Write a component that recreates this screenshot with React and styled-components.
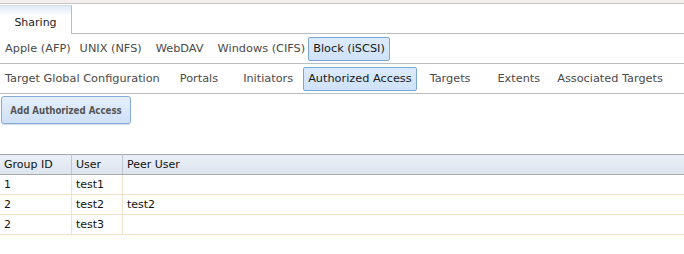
import React from "react";
import styled, { createGlobalStyle } from "styled-components";

const Global = createGlobalStyle`
  html, body { margin: 0; padding: 0; background: #fff; }
  body { font-family: "DejaVu Sans", "Liberation Sans", sans-serif; font-size: 11.3px; color: #3c3c3c; }
`;

const TopStrip = styled.div`
  height: 3px;
  background: #f3efef;
  border-bottom: 1px solid #c6c6c6;
`;

const TabBar = styled.div`
  display: flex;
  margin-top: 1px;
  height: 28px;
  border-bottom: 1px solid #b9bcc2;
`;

const MainTab = styled.div`
  width: 72px;
  box-sizing: border-box;
  border-right: 1px solid #b9bcc2;
  border-top: 1px solid #d6dde8;
  margin-bottom: -1px;
  background: linear-gradient(#dfe9f7 0%, #ffffff 35%);
  display: flex;
  align-items: center;
  justify-content: center;
  padding-top: 5px;
  font-size: 11px;
  color: #222;
`;

const NavRow = styled.div`
  display: flex;
  align-items: center;
  height: 29px;
  border-bottom: 1px solid #b9bcc2;
`;

const NavItem = styled.div`
  box-sizing: border-box;
  height: 24px;
  display: flex;
  align-items: center;
  padding: 0 4px;
  margin-right: ${(p) => p.$gap}px;
  border: 1px solid ${(p) => (p.$active ? "#7ea6d4" : "transparent")};
  border-radius: 2px;
  background: ${(p) => (p.$active ? "linear-gradient(#dcebfc, #cfe2f9)" : "transparent")};
  color: ${(p) => (p.$active ? "#1a1a1a" : "#4a4a4a")};
  white-space: nowrap;
`;

const Toolbar = styled.div`
  padding: 2px 0 0 1px;
  height: 58px;
`;

const ActionButton = styled.button`
  box-sizing: border-box;
  height: 28px;
  width: 130px;
  padding: 0;
  font-family: "DejaVu Sans Condensed", "DejaVu Sans", sans-serif;
  font-weight: bold;
  font-size: 9.6px;
  color: #555;
  border: 1px solid #86abd6;
  border-radius: 3px;
  background: linear-gradient(#e4effc, #cfe1f7);
  box-shadow: 0 1px 1px rgba(120, 150, 190, 0.35);
`;

const Table = styled.table`
  width: 100%;
  border-collapse: collapse;
  color: #111;
  font-size: 11px;
`;

const HeadCell = styled.th`
  text-align: left;
  font-weight: normal;
  height: 19px;
  padding: 0 4px;
  width: ${(p) => (p.$w ? `${p.$w}px` : "auto")};
  background: linear-gradient(#ebf0f8, #dde4ee);
  border-top: 1px solid #a9a9a9;
  border-bottom: 1px solid #a9a9a9;
  border-right: 1px solid #c2c6cc;
  &:last-child { border-right: none; }
`;

const Cell = styled.td`
  height: 19px;
  padding: 0 4px;
  border-bottom: 1px solid #f1e0ca;
  border-right: 1px solid #f1e0ca;
  &:last-child { border-right: none; }
`;

const shares = [
  ["Apple (AFP)", -1],
  ["UNIX (NFS)", 4],
  ["WebDAV", 4],
  ["Windows (CIFS)", -2],
  ["Block (iSCSI)", 0, true],
];

const iscsi = [
  ["Target Global Configuration", 10],
  ["Portals", 15],
  ["Initiators", 5],
  ["Authorized Access", 8, true],
  ["Targets", 17],
  ["Extents", 7],
  ["Associated Targets", 0],
];

const rows = [
  ["1", "test1", ""],
  ["2", "test2", "test2"],
  ["2", "test3", ""],
];

export default function App() {
  return (
    <>
      <Global />
      <TopStrip />
      <TabBar>
        <MainTab>Sharing</MainTab>
      </TabBar>
      <NavRow>
        {shares.map(([t, g, a]) => (
          <NavItem key={t} $gap={g} $active={a}>{t}</NavItem>
        ))}
      </NavRow>
      <NavRow>
        {iscsi.map(([t, g, a]) => (
          <NavItem key={t} $gap={g} $active={a}>{t}</NavItem>
        ))}
      </NavRow>
      <Toolbar>
        <ActionButton>Add Authorized Access</ActionButton>
      </Toolbar>
      <Table>
        <thead>
          <tr>
            <HeadCell $w={63}>Group ID</HeadCell>
            <HeadCell $w={42}>User</HeadCell>
            <HeadCell>Peer User</HeadCell>
          </tr>
        </thead>
        <tbody>
          {rows.map((r, i) => (
            <tr key={i}>
              {r.map((c, j) => (
                <Cell key={j}>{c}</Cell>
              ))}
            </tr>
          ))}
        </tbody>
      </Table>
    </>
  );
}
